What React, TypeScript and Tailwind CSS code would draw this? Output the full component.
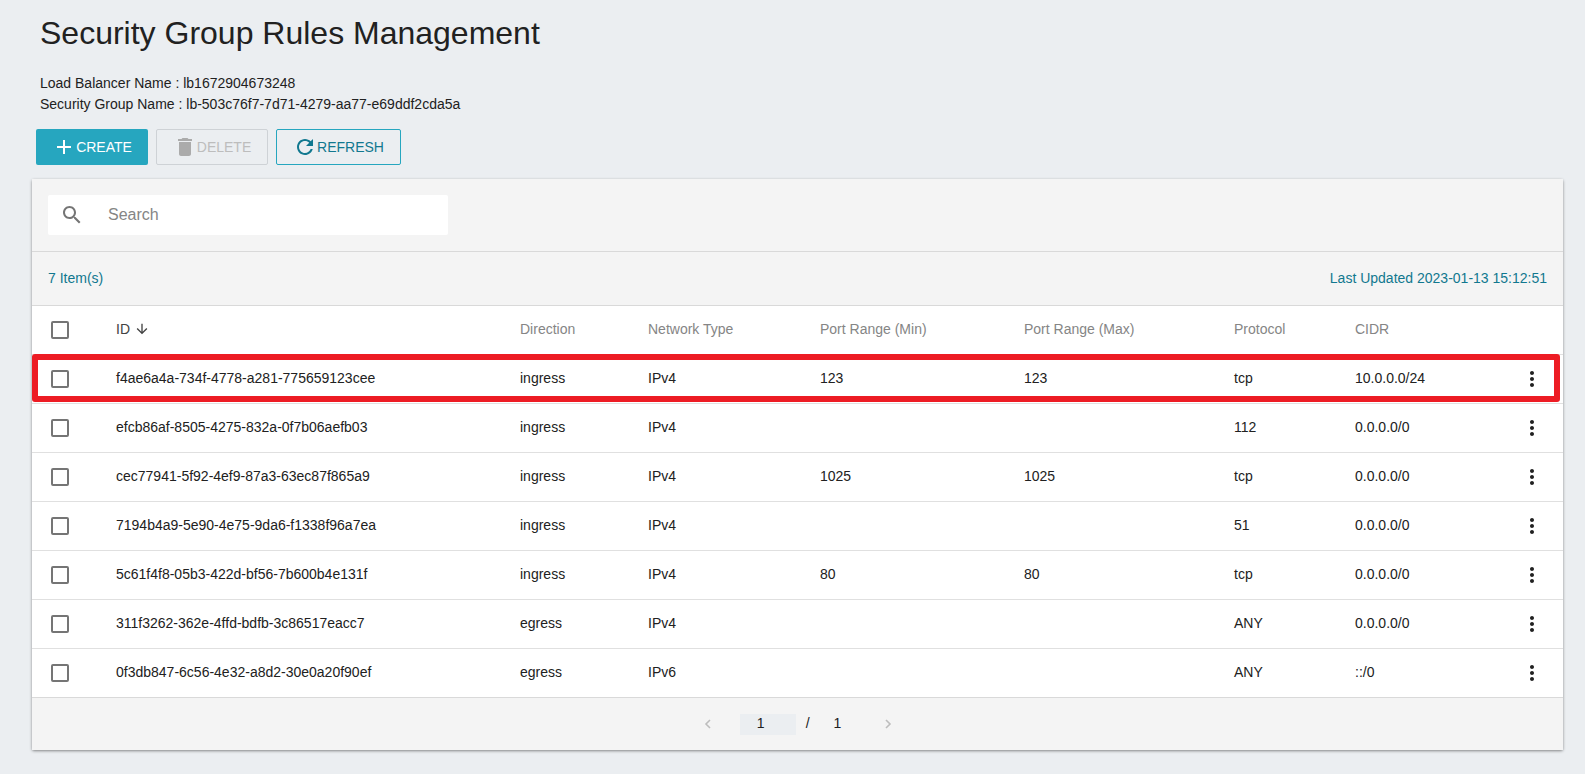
import React from "react";

const rows = [
  ["f4ae6a4a-734f-4778-a281-775659123cee", "ingress", "IPv4", "123", "123", "tcp", "10.0.0.0/24"],
  ["efcb86af-8505-4275-832a-0f7b06aefb03", "ingress", "IPv4", "", "", "112", "0.0.0.0/0"],
  ["cec77941-5f92-4ef9-87a3-63ec87f865a9", "ingress", "IPv4", "1025", "1025", "tcp", "0.0.0.0/0"],
  ["7194b4a9-5e90-4e75-9da6-f1338f96a7ea", "ingress", "IPv4", "", "", "51", "0.0.0.0/0"],
  ["5c61f4f8-05b3-422d-bf56-7b600b4e131f", "ingress", "IPv4", "80", "80", "tcp", "0.0.0.0/0"],
  ["311f3262-362e-4ffd-bdfb-3c86517eacc7", "egress", "IPv4", "", "", "ANY", "0.0.0.0/0"],
  ["0f3db847-6c56-4e32-a8d2-30e0a20f90ef", "egress", "IPv6", "", "", "ANY", "::/0"],
];

function Check() {
  return <span className="block w-[18px] h-[18px] border-2 border-[#757575] rounded-[2px]" />;
}

function Kebab() {
  return (
    <svg width="24" height="24" viewBox="0 0 24 24" fill="#212121">
      <path d="M12 8c1.1 0 2-.9 2-2s-.9-2-2-2-2 .9-2 2 .9 2 2 2zm0 2c-1.1 0-2 .9-2 2s.9 2 2 2 2-.9 2-2-.9-2-2-2zm0 6c-1.1 0-2 .9-2 2s.9 2 2 2 2-.9 2-2-.9-2-2-2z" />
    </svg>
  );
}

export default function App() {
  return (
    <div className="w-[1585px] h-[774px] overflow-hidden bg-[#ebeef1] font-['Liberation_Sans',Arial,sans-serif] text-[14px] text-[#212121]">
      <div className="pl-[40px] pt-[12px]">
        <h1 className="text-[32px] leading-[42px] text-[#212121]">Security Group Rules Management</h1>
        <div className="mt-[19px] text-[14px] leading-[21px]">
          <p>Load Balancer Name : lb1672904673248</p>
          <p>Security Group Name : lb-503c76f7-7d71-4279-aa77-e69ddf2cda5a</p>
        </div>
      </div>

      <div className="flex gap-[8px] pl-[36px] mt-[14px]">
        <button className="w-[112px] h-[36px] flex items-center justify-center rounded-[2px] bg-[#26a6bf] text-white">
          <svg width="24" height="24" viewBox="0 0 24 24" fill="#fff"><path d="M19 13h-6v6h-2v-6H5v-2h6V5h2v6h6v2z" /></svg>
          <span>CREATE</span>
        </button>
        <button className="w-[112px] h-[36px] flex items-center justify-center rounded-[2px] border border-[#ced2d6] text-[#bdbdbd]">
          <svg width="24" height="24" viewBox="0 0 24 24" fill="#ababab"><path d="M6 19c0 1.1.9 2 2 2h8c1.1 0 2-.9 2-2V7H6v12zM19 4h-3.5l-1-1h-5l-1 1H5v2h14V4z" /></svg>
          <span>DELETE</span>
        </button>
        <button className="w-[125px] h-[36px] flex items-center justify-center rounded-[2px] border border-[#26a6bf] text-[#11788f]">
          <svg width="24" height="24" viewBox="0 0 24 24" fill="#11788f"><path d="M17.65 6.35C16.2 4.9 14.21 4 12 4c-4.42 0-7.99 3.58-7.99 8s3.57 8 7.99 8c3.73 0 6.84-2.55 7.73-6h-2.08c-.82 2.33-3.04 4-5.65 4-3.31 0-6-2.69-6-6s2.69-6 6-6c1.66 0 3.14.69 4.22 1.78L13 11h7V4l-2.35 2.35z" /></svg>
          <span>REFRESH</span>
        </button>
      </div>

      <div className="relative ml-[32px] mt-[14px] w-[1531px] h-[571px] rounded-[2px] bg-white shadow-[0_1px_3px_rgba(0,0,0,0.45)] flex flex-col">
        <div className="h-[73px] bg-[#f4f4f4] border-b border-[#d9d9d9] pl-[16px] pt-[16px] shrink-0">
          <div className="w-[400px] h-[40px] bg-white rounded-[2px] flex items-center pl-[12px]">
            <svg width="24" height="24" viewBox="0 0 24 24" fill="#757575"><path d="M15.5 14h-.79l-.28-.27C15.41 12.59 16 11.11 16 9.5 16 5.91 13.09 3 9.5 3S3 5.91 3 9.5 5.91 16 9.5 16c1.61 0 3.09-.59 4.23-1.57l.27.28v.79l5 4.99L20.49 19l-4.99-5zm-6 0C7.01 14 5 11.99 5 9.5S7.01 5 9.5 5 14 7.01 14 9.5 11.99 14 9.5 14z" /></svg>
            <span className="ml-[24px] text-[#858585] text-[16px]">Search</span>
          </div>
        </div>

        <div className="h-[54px] bg-[#f4f4f4] border-b border-[#d9d9d9] pl-[16px] pr-[16px] flex items-center justify-between text-[14px] text-[#11788f] shrink-0">
          <span>7 Item(s)</span>
          <span>Last Updated 2023-01-13 15:12:51</span>
        </div>

        <div className="h-[48px] flex items-center text-[#858585] shrink-0">
          <div className="w-[84px] pl-[19px]"><Check /></div>
          <div className="w-[404px] pb-[2px] flex items-center gap-[4px] text-[#424242]">
            ID
            <svg width="16" height="16" viewBox="0 0 24 24" fill="#424242"><path d="M20 12l-1.41-1.41L13 16.17V4h-2v12.17l-5.58-5.59L4 12l8 8 8-8z" /></svg>
          </div>
          <div className="w-[128px] pb-[2px]">Direction</div>
          <div className="w-[172px] pb-[2px]">Network Type</div>
          <div className="w-[204px] pb-[2px]">Port Range (Min)</div>
          <div className="w-[210px] pb-[2px]">Port Range (Max)</div>
          <div className="w-[121px] pb-[2px]">Protocol</div>
          <div className="pb-[2px]">CIDR</div>
        </div>

        {rows.map((r) => (
          <div key={r[0]} className="h-[49px] flex items-center border-t border-[#e0e0e0] shrink-0">
            <div className="w-[84px] pl-[19px]"><Check /></div>
            <div className="w-[404px] pb-[2px]">{r[0]}</div>
            <div className="w-[128px] pb-[2px]">{r[1]}</div>
            <div className="w-[172px] pb-[2px]">{r[2]}</div>
            <div className="w-[204px] pb-[2px]">{r[3]}</div>
            <div className="w-[210px] pb-[2px]">{r[4]}</div>
            <div className="w-[121px] pb-[2px]">{r[5]}</div>
            <div className="w-[165px] pb-[2px]">{r[6]}</div>
            <Kebab />
          </div>
        ))}

        <div className="flex-1 bg-[#f4f4f4] border-t border-[#d9d9d9] flex items-center justify-center text-[14px]">
          <svg className="ml-[1px]" width="16" height="16" viewBox="0 0 24 24" fill="none" stroke="#bdbdbd" strokeWidth="2.4"><path d="M15 6l-6 6 6 6" /></svg>
          <span className="ml-[24px] w-[56px] h-[21px] bg-[#ebeef1] pl-[17px] leading-[18px]">1</span>
          <span className="ml-[10px] pb-[2px]">/</span>
          <span className="ml-[24px] pb-[2px]">1</span>
          <svg className="ml-[39px]" width="16" height="16" viewBox="0 0 24 24" fill="none" stroke="#bdbdbd" strokeWidth="2.4"><path d="M9 6l6 6-6 6" /></svg>
        </div>

        <div className="absolute left-0 top-[175px] w-[1528px] h-[48px] border-[6px] border-[#ed1c24] rounded-[3px]" />
      </div>
    </div>
  );
}
